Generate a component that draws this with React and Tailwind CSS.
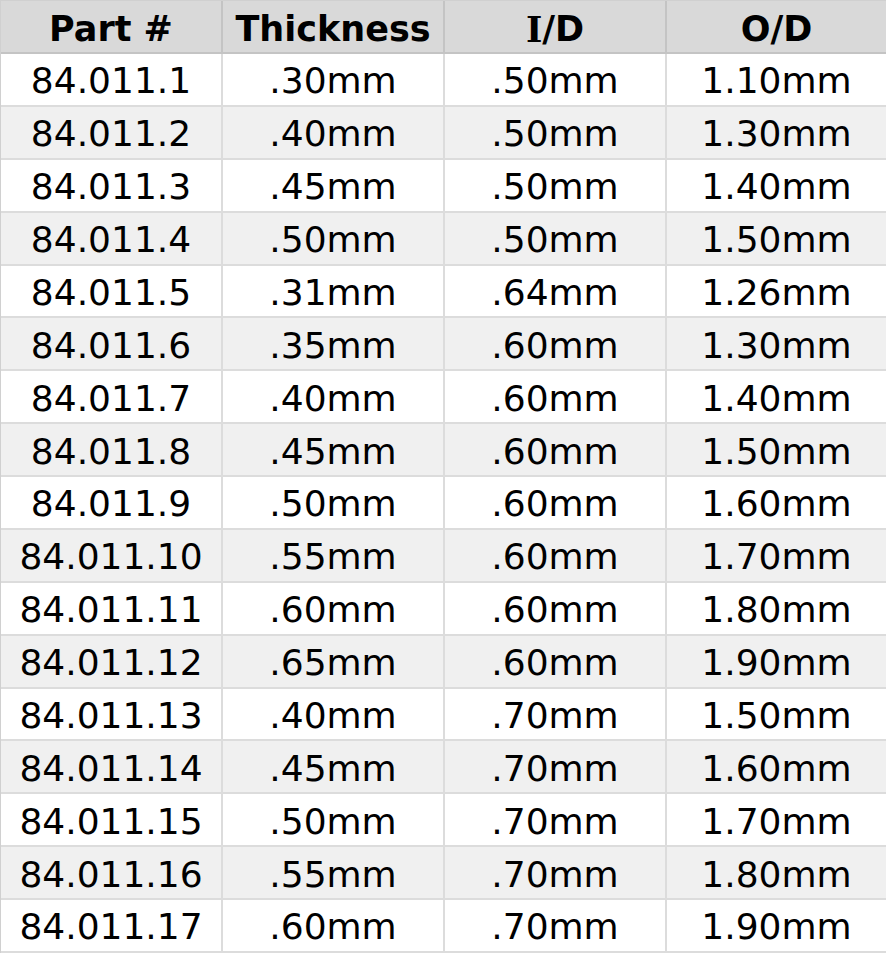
const rows = [
  ["84.011.1", ".30mm", ".50mm", "1.10mm"],
  ["84.011.2", ".40mm", ".50mm", "1.30mm"],
  ["84.011.3", ".45mm", ".50mm", "1.40mm"],
  ["84.011.4", ".50mm", ".50mm", "1.50mm"],
  ["84.011.5", ".31mm", ".64mm", "1.26mm"],
  ["84.011.6", ".35mm", ".60mm", "1.30mm"],
  ["84.011.7", ".40mm", ".60mm", "1.40mm"],
  ["84.011.8", ".45mm", ".60mm", "1.50mm"],
  ["84.011.9", ".50mm", ".60mm", "1.60mm"],
  ["84.011.10", ".55mm", ".60mm", "1.70mm"],
  ["84.011.11", ".60mm", ".60mm", "1.80mm"],
  ["84.011.12", ".65mm", ".60mm", "1.90mm"],
  ["84.011.13", ".40mm", ".70mm", "1.50mm"],
  ["84.011.14", ".45mm", ".70mm", "1.60mm"],
  ["84.011.15", ".50mm", ".70mm", "1.70mm"],
  ["84.011.16", ".55mm", ".70mm", "1.80mm"],
  ["84.011.17", ".60mm", ".70mm", "1.90mm"],
];

function Cell({ children, last, header }) {
  return (
    <div
      className={
        (last ? "flex-1 " : "w-[222px] shrink-0 border-r-2 ") +
        (header
          ? "border-[#c4c4c4] font-bold text-[35px] pt-[6px] "
          : "border-[#dcdcdc] pt-[4px] ") +
        "flex items-center justify-center leading-none"
      }
    >
      {children}
    </div>
  );
}

export default function App() {
  return (
    <div
      className="w-[886px] h-[954px] overflow-hidden bg-white text-black text-[36px]"
      style={{ fontFamily: '"DejaVu Sans", Verdana, sans-serif' }}
    >
      <div className="border-l border-t border-[#d0d0d0]">
        <div className="flex h-[53px] bg-[#d9d9d9] border-b-2 border-[#c4c4c4]">
          <Cell header>Part #</Cell>
          <Cell header>Thickness</Cell>
          <Cell header>
            <span style={{ fontFamily: '"DejaVu Serif", serif' }}>I</span>/D
          </Cell>
          <Cell header last>O/D</Cell>
        </div>
        {rows.map((r, ri) => (
          <div
            key={r[0]}
            className={
              "flex h-[52.88px] border-b-2 border-[#dcdcdc] " +
              (ri % 2 === 1 ? "bg-[#f0f0f0]" : "bg-white")
            }
          >
            {r.map((c, i) => (
              <Cell key={i} last={i === 3}>
                {c}
              </Cell>
            ))}
          </div>
        ))}
      </div>
    </div>
  );
}
